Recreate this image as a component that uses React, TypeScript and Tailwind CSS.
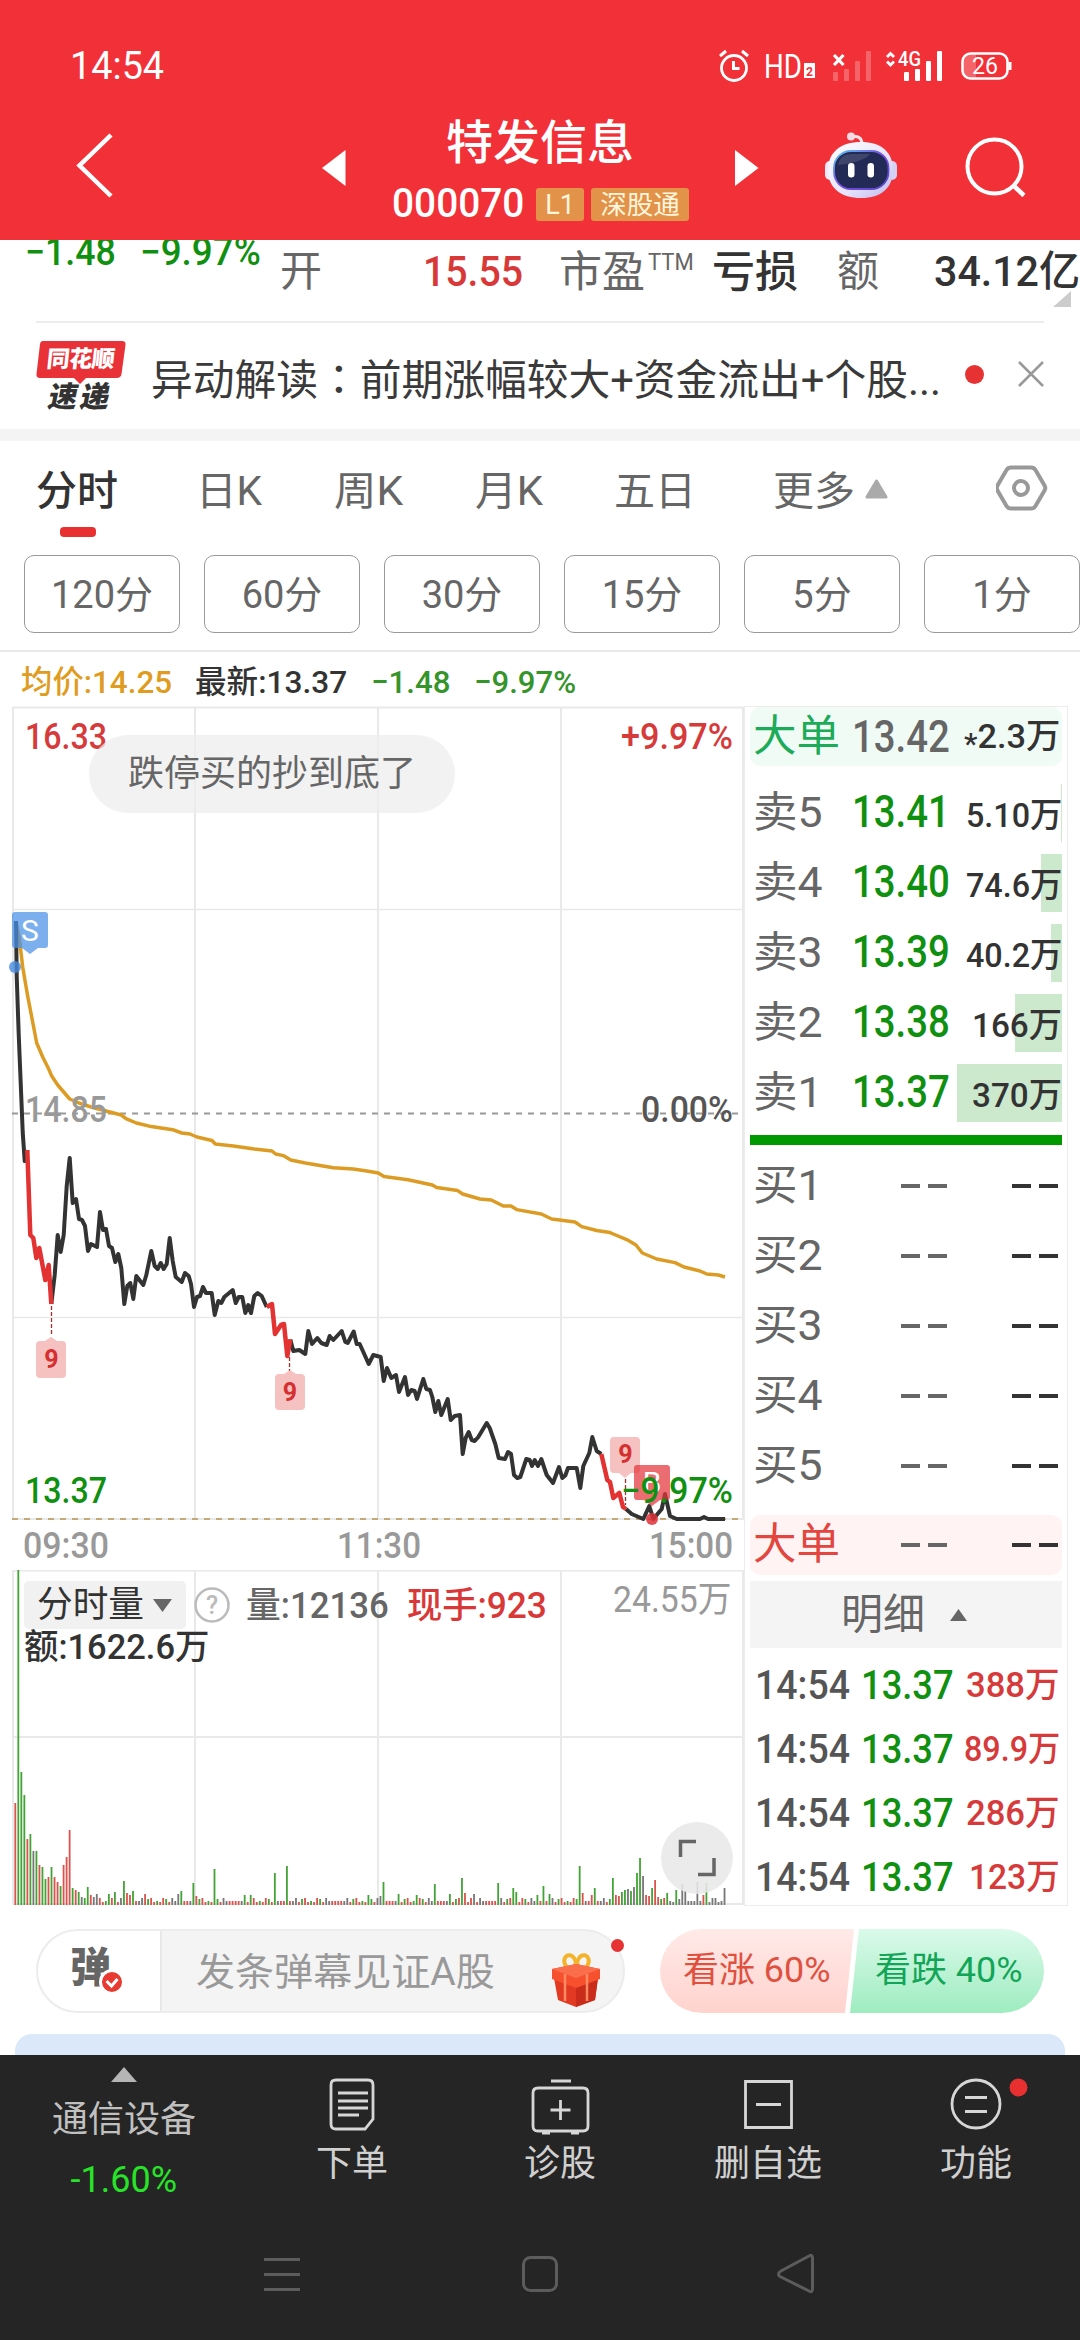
import { useLayoutEffect, useRef, useState } from "react";
import type { ReactNode } from "react";

const FONT = "font-['Roboto','Noto_Sans_CJK_SC',sans-serif]";

const tabs = [
  { label: "日K", w: 66, className: "ml-[74px]" },
  { label: "周K", w: 69, className: "ml-[72px]" },
  { label: "月K", w: 68, className: "ml-[72px]" },
  { label: "五日", w: 82, className: "ml-[71px]" },
  { label: "更多", w: 82, className: "ml-[77px]" },
];

const periods = ["120分", "60分", "30分", "15分", "5分", "1分"];

const asks = [
  { label: "卖5", price: "13.41", vol: "5.10万", bar: 1 },
  { label: "卖4", price: "13.40", vol: "74.6万", bar: 21 },
  { label: "卖3", price: "13.39", vol: "40.2万", bar: 11 },
  { label: "卖2", price: "13.38", vol: "166万", bar: 47 },
  { label: "卖1", price: "13.37", vol: "370万", bar: 105 },
];

const bids = ["买1", "买2", "买3", "买4", "买5"];

const trades = [
  { vol: "388万", w: 94 },
  { vol: "89.9万", w: 96 },
  { vol: "286万", w: 94 },
  { vol: "123万", w: 91 },
];

const avgLine =
  "16,922 19.3,938 22.7,967 27.3,994 36.7,1043 42.7,1057 48.7,1069 51.7,1076 57.7,1085 63.7,1092 69.7,1099 79,1103 91,1107 106,1111 121.3,1115 126,1118.6 136.3,1123 151.3,1126.6 172.7,1129.7 181.7,1133 190,1134 197,1137 212,1140.5 215.3,1144 233.3,1146 254.3,1149 272,1151 275.7,1154 283.3,1155.6 290.7,1160 305.3,1163 333.3,1167.7 353.3,1169 366.7,1171 378.3,1173 384,1176.6 408,1179.7 432.3,1185 436.7,1187.6 457.7,1190.6 462.7,1194 480,1199 491.3,1200 503.3,1206 511,1206 516.7,1209.6 541.3,1214 551.7,1219 575,1222 581.7,1226.6 596.7,1230.5 610,1232.6 613.3,1234 626.7,1239.6 636,1245 642.3,1253 656.7,1259 675,1262.6 684,1267 700,1271 706.7,1274 718.3,1275 725,1277";

const priceLines = [
  "16,921 16.7,976 18.7,1034 20.7,1083 22.7,1132 24.7,1161 27.3,1150",
  "51.3,1304 54.7,1275 57.7,1235 60.7,1252 63.7,1235 66.7,1186 69.7,1158 72.7,1203 76,1199 79,1219 82,1220 85,1226 88,1251 91,1244 97,1247 100,1212 103,1230 106,1229 109,1246 112,1248 115.3,1262 118.3,1254 121.3,1268 124.3,1304 127.3,1286 130.3,1283 133.3,1299 136.3,1276 143.3,1285 146.3,1275 151.3,1251 154.7,1266 157.7,1269 160.7,1263 163.7,1269 166.7,1264 169.7,1238 172.7,1261 175.7,1277 181.7,1282 185,1273 188.7,1276 191,1284 194,1307 197,1297 200,1296 203,1287 206,1293 211.7,1293 214.7,1315 218.3,1301 221.3,1303 224.3,1297 232.7,1290 235.7,1303 238.7,1297 242.3,1297 245.3,1313 248.3,1305 251,1313 254.3,1296 257.7,1293 261.7,1296 266.7,1307",
  "290.3,1339.5 293.3,1351 299.3,1350 305.3,1354 308.3,1331 312,1344 317.3,1338 321.3,1343 326.7,1345 329.7,1336 333.3,1340 341.7,1331 345.3,1342 347.7,1343 353.7,1331.5 356.7,1344 359.7,1344 368.7,1364 373.3,1355 380.7,1357 383.7,1381 387,1368 391.3,1378 396,1375 399,1392 405,1377 408,1395 411.3,1390 414.7,1391 417,1399 423.3,1379 426.3,1389 430,1390 432.3,1397 435.3,1412 438.3,1401 441.3,1415 447.7,1399 450.7,1420 454.7,1416 460,1415 462.7,1454 465.7,1438 468.7,1432 471.7,1440 474.7,1441 478.3,1437 486.7,1423 489.7,1428 495.3,1444 498.7,1458 505,1459 508,1452 511,1454 514,1475 517.3,1478 520.3,1477 526.3,1459 529.7,1460 532,1466 534.7,1460 538,1466 541.3,1459 546.7,1475 553,1483 559,1467 562.3,1478 565.3,1475.5 568,1468 576.7,1468 580.3,1488 583.3,1466 589.3,1453 592.3,1437 596.7,1451 601.3,1454",
  "626,1509 631.7,1514 643.3,1519 649.3,1506 653.3,1519 661.7,1509 665,1494 670,1516 676.7,1519 700,1519 704,1517 708,1519 725,1519",
];

const dropLines = [
  "27.3,1150 30.3,1235 33.3,1238 36.3,1258 39.3,1248 45.3,1280 48.7,1265 51.3,1304",
  "266.7,1307 272,1304 275,1334 281,1325 284,1324 287.3,1356 290.3,1339.5",
  "601.3,1454 607.3,1480 610,1482 613.3,1498 619.3,1493 623,1507 626,1509",
];

const barColors: Record<string, string> = {
  r: "#d9534f",
  g: "#43a336",
  k: "#777777",
};

// minute index -> bar height and colour
const peaks: Record<number, [number, string]> = {
  0: [102, "r"], 1: [335, "g"], 2: [133, "g"], 3: [110, "g"], 4: [66, "r"], 5: [71, "g"],
  6: [54, "k"], 7: [54, "g"], 8: [40, "r"], 9: [38, "g"], 10: [26, "g"], 11: [28, "r"],
  12: [38, "g"], 13: [28, "r"], 14: [23, "r"], 15: [19, "g"], 16: [40, "r"], 17: [48, "r"],
  18: [75, "r"], 19: [17, "g"], 20: [15, "r"], 21: [13, "g"], 22: [8, "k"], 23: [7, "g"],
  24: [18, "g"], 25: [10, "r"], 26: [8, "k"], 27: [11, "k"], 31: [11, "g"], 33: [13, "g"],
  36: [24, "g"], 37: [12, "r"], 38: [10, "r"], 39: [14, "g"], 43: [11, "r"], 54: [11, "k"],
  55: [14, "g"], 59: [22, "g"], 60: [9, "r"], 66: [36, "g"], 76: [10, "g"], 78: [10, "g"],
  86: [32, "g"], 90: [39, "g"], 117: [10, "g"], 121: [9, "k"], 122: [23, "g"], 127: [11, "g"],
  133: [10, "g"], 139: [21, "g"], 144: [11, "g"], 148: [27, "g"], 149: [12, "r"], 152: [11, "k"],
  160: [22, "g"], 165: [17, "g"], 166: [13, "g"], 173: [10, "g"], 175: [19, "g"], 177: [11, "g"],
  187: [39, "g"], 188: [12, "r"], 191: [10, "r"], 192: [17, "g"], 198: [27, "g"], 199: [10, "r"],
  200: [9, "r"], 201: [13, "g"], 202: [15, "g"], 203: [16, "k"], 204: [14, "g"], 205: [18, "k"],
  206: [32, "g"], 207: [47, "g"], 208: [29, "k"], 209: [10, "r"], 210: [9, "r"], 211: [17, "g"],
  212: [25, "r"], 213: [8, "r"], 216: [12, "g"], 219: [15, "g"], 221: [21, "k"], 222: [14, "k"],
  226: [23, "k"], 228: [10, "r"], 229: [22, "g"], 231: [7, "k"], 235: [17, "k"],
};

const bars = Array.from({ length: 236 }, (_, i): [number, string] => {
  if (peaks[i]) return peaks[i];
  const n = (i * 37 + i * i * 11) % 17;
  return [3 + (n % 5), i > 215 ? "k" : n < 7 ? "r" : n < 14 ? "g" : "k"];
});

// Squeezes a line of text into the given width
function Fit({ w, className = "", children }: { w: number; className?: string; children: ReactNode }) {
  const ref = useRef<HTMLSpanElement>(null);
  const [scale, setScale] = useState(1);

  useLayoutEffect(() => {
    if (ref.current) setScale(w / ref.current.offsetWidth);
  }, [w]);

  return (
    <span className={`block shrink-0 whitespace-nowrap ${className}`} style={{ width: w }}>
      <span ref={ref} className="inline-block origin-left" style={{ transform: `scaleX(${scale})` }}>
        {children}
      </span>
    </span>
  );
}

function StatusBar() {
  return (
    <div className="flex h-[108px] items-end pl-[70px]">
      <Fit w={94} className="text-[39px] leading-none mb-[22px]">14:54</Fit>
      <svg className="ml-[554px] mb-[22px]" width="296" height="40" viewBox="718 46 296 40" fill="none" stroke="#fff">
        <circle cx="734" cy="68" r="12.5" strokeWidth="2.8" />
        <path d="M733.5 61v7.5h6M720 56l6-5M748 56l-6-5" strokeWidth="3" />
        <g stroke="none" fill="#fff" fontFamily="Roboto">
          <text x="764" y="78" fontSize="33" textLength="38" lengthAdjust="spacingAndGlyphs">HD</text>
          <rect x="804" y="63" width="11" height="15" />
          <text x="806" y="76" fontSize="13" fontWeight="700" fill="#f23037" textLength="7" lengthAdjust="spacingAndGlyphs">2</text>
          <g fillOpacity=".25">
            <rect x="833" y="72" width="5" height="9" rx="1" />
            <rect x="844" y="69" width="5" height="12" rx="1" />
            <rect x="855" y="61" width="5" height="20" rx="1" />
            <rect x="866" y="51" width="5" height="30" rx="1" />
          </g>
          <rect x="904" y="72" width="5" height="9" rx="1" />
          <rect x="915" y="69" width="5" height="12" rx="1" />
          <rect x="926" y="61" width="5" height="20" rx="1" />
          <rect x="937" y="51" width="5" height="30" rx="1" />
          <text x="898" y="66" fontSize="20" fontWeight="500" textLength="23" lengthAdjust="spacingAndGlyphs">4G</text>
        </g>
        <path d="M834 55l9.500 10M843.500 55l-9.500 10" strokeWidth="3.200" />
        <path d="M887 57l3.500-3.500 3.500 3.500M887 61.500l3.500 3.500 3.500-3.500" strokeWidth="2.800" />
        <path d="M972 54h4v25h-4q-8 0-8-8v-9q0-8 8-8" fill="#fff" fillOpacity=".25" stroke="none" />
        <rect x="962.500" y="53.500" width="45" height="25" rx="8" strokeWidth="2.600" />
        <path d="M1010 62v8" strokeWidth="3" />
        <text x="972" y="73.500" fontSize="23" fontFamily="Roboto" fill="#fff" stroke="none" textLength="26" lengthAdjust="spacingAndGlyphs">26</text>
      </svg>
    </div>
  );
}

function Robot() {
  return (
    <svg width="76" height="72" viewBox="823 130 76 72">
      <defs>
        <linearGradient id="shell" x1="0" y1="0" x2="1" y2="1">
          <stop offset="0" stopColor="#ffffff" />
          <stop offset=".6" stopColor="#e6e3fb" />
          <stop offset="1" stopColor="#bdb8ee" />
        </linearGradient>
        <linearGradient id="visor" x1="0" y1="0" x2="1" y2="1">
          <stop offset="0" stopColor="#58c8f0" />
          <stop offset=".5" stopColor="#7a4be0" />
          <stop offset="1" stopColor="#5648c8" />
        </linearGradient>
      </defs>
      <path d="M852 137q9-2 10 6" fill="none" stroke="#fbe4ea" strokeWidth="3" />
      <circle cx="851" cy="136.500" r="4" fill="#f6dbe4" />
      <rect x="825" y="161" width="10" height="19" rx="5" fill="#e9e7f8" />
      <rect x="887" y="161" width="10" height="19" rx="5" fill="#d5d0f5" />
      <path d="M861 142c20 0 32 10 32 28s-12 28-32 28-33-10-33-28 13-28 33-28" fill="url(#shell)" />
      <rect x="834" y="151" width="54.500" height="38" rx="17" fill="#232a55" stroke="url(#visor)" strokeWidth="1.800" />
      <path d="M838 165q2-11 14-11h18q-6 8-32 11" fill="#ffffff" opacity=".13" />
      <rect x="848" y="163" width="6.500" height="14.500" rx="3.200" fill="#fff" />
      <rect x="867.500" y="163" width="6.500" height="14.500" rx="3.200" fill="#fff" />
    </svg>
  );
}

function Header() {
  return (
    <header className="h-[240px] bg-[#f23037] text-white">
      <StatusBar />
      <div className="flex h-[132px]">
        <svg className="mt-[23px] ml-[74px]" width="42" height="70" viewBox="74 131 42 70">
          <path d="M111 135L79.500 165.500L111 196" fill="none" stroke="#fff" strokeWidth="4.500" />
        </svg>
        <svg className="ml-[206px] mt-[42px]" width="24" height="36" viewBox="0 0 24 36">
          <path d="M0 18L23.500 0v36z" fill="#fff" />
        </svg>
        <div className="ml-[42px] w-[304px]">
          <h1 className="mt-[10px] h-[50px] text-center text-[47px] leading-[50px] font-medium">特发信息</h1>
          <div className="mt-[20px] flex h-[32px] items-center">
            <Fit w={132} className="ml-[4px] text-[40px] leading-[32px] font-medium">000070</Fit>
            <span className="ml-[12px] h-[33px] w-[48px] rounded-[3px] bg-[#e3924a] text-center text-[27px] leading-[34px] text-[#fff6dc]">L1</span>
            <span className="ml-[7px] h-[33px] w-[98px] rounded-[3px] bg-[#e3924a] text-center text-[26.500px] leading-[33px] text-[#fff6dc]">深股通</span>
          </div>
        </div>
        <svg className="ml-[43px] mt-[42px]" width="24" height="36" viewBox="0 0 24 36">
          <path d="M23.500 18L0 0v36z" fill="#fff" />
        </svg>
        <div className="mt-[22px] ml-[64px]"><Robot /></div>
        <svg className="mt-[26px] ml-[65px]" width="64" height="66" viewBox="964 134 64 66" fill="none" stroke="#fff">
          <circle cx="994.500" cy="166.500" r="27" strokeWidth="4" />
          <path d="M1013 185l11 10.500" strokeWidth="4.500" />
        </svg>
      </div>
    </header>
  );
}

function QuoteStrip() {
  return (
    <div className="flex h-[81px] overflow-hidden text-[42px] leading-[64px] whitespace-nowrap">
      <Fit w={91} className="-mt-[18px] ml-[25px] text-[38px] leading-[60px] font-medium text-[#109010]">−1.48</Fit>
      <Fit w={121} className="-mt-[18px] ml-[24px] text-[38px] leading-[60px] font-medium text-[#109010]">−9.97%</Fit>
      <span className="ml-[19px] w-[42px] text-[#666]">开</span>
      <Fit w={100} className="ml-[101px] font-medium text-[#d93838]">15.55</Fit>
      <span className="ml-[36px] w-[86px] text-[43px] text-[#666]">市盈</span>
      <Fit w={46} className="-mt-[9px] ml-[3px] text-[23px] text-[#666]">TTM</Fit>
      <span className="ml-[18px] w-[88px] text-[43px] font-medium text-[#333]">亏损</span>
      <span className="ml-[37px] w-[42px] text-[#666]">额</span>
      <Fit w={146} className="ml-[55px] font-medium text-[#333]">34.12亿</Fit>
      <svg className="mt-[51px] -ml-[27px] shrink-0" width="18" height="16" viewBox="0 0 18 16">
        <path d="M18 0v16H0z" fill="#ccc" />
      </svg>
    </div>
  );
}

function NewsRow() {
  return (
    <div className="mx-9 flex h-[108px] items-center border-t-2 border-[#ececec]">
      <div className="relative h-[72px] w-[90px] text-center">
        <svg className="absolute top-0 left-0" width="90" height="46" viewBox="0 0 90 46">
          <path d="M7 1h79q4 0 3.500 4l-4 29q-.5 4-5 4H50l-6 6-6-6H4q-4 0-3.500-4L4 4q.5-3 3-3" fill="#e93238" />
        </svg>
        <div className="relative -skew-x-6 pt-[8px] text-[23px] leading-[24px] font-black tracking-[-.5px] text-white">同花顺</div>
        <div className="relative mt-[11px] -skew-x-12 text-[29px] leading-[28px] font-black tracking-[3px] text-[#333]">速递</div>
      </div>
      <Fit w={790} className="mt-[5px] ml-[25px] text-[42px] text-[#3a3a3a]">
        异动解读<span className="font-['Noto_Sans_CJK_TC',sans-serif]" lang="zh-TW">：</span>前期涨幅较大+资金流出+个股...
      </Fit>
      <span className="-mt-[4px] ml-[24px] size-[19px] rounded-full bg-[#e63232]" />
      <svg className="-mt-[4px] ml-[34px]" width="26" height="26" viewBox="0 0 26 26">
        <path d="M1 1l24 24M25 1L1 25" stroke="#999" strokeWidth="2.500" />
      </svg>
    </div>
  );
}

function Tabs() {
  return (
    <div className="border-t-[12px] border-[#f4f4f4]">
      <div className="flex h-[114px] pl-[36px] text-[40px] leading-[101px] text-[#666]">
        <div className="relative w-[86px] text-[41px] font-medium text-[#333]">
          分时
          <span className="absolute top-[86px] left-[24px] h-[10px] w-[36px] rounded-[4px] bg-[#e93030]" />
        </div>
        {tabs.map((tab) => (
          <Fit key={tab.label} w={tab.w} className={tab.className}>{tab.label}</Fit>
        ))}
        <svg className="mt-[38px] ml-[10px]" width="23" height="20" viewBox="0 0 23 20">
          <path d="M11.500 2L21 18H2z" fill="#aaa" stroke="#aaa" strokeWidth="3" strokeLinejoin="round" />
        </svg>
        <svg className="mt-[23px] ml-[108px]" width="52" height="48" viewBox="0 0 52 48" fill="none" stroke="#999">
          <path d="M15 3.500h20q3 0 4.500 2.500l9 15.500q1.500 2.500 0 5l-9 15.500q-1.500 2.500-4.500 2.500H15q-3 0-4.500-2.500l-9-15.500q-1.500-2.500 0-5l9-15.500q1.500-2.500 4.500-2.500" strokeWidth="4" />
          <circle cx="25" cy="24" r="7" strokeWidth="4" />
        </svg>
      </div>
      <div className="flex gap-6 pl-6">
        {periods.map((p) => (
          <button key={p} className="h-[78px] w-[156px] shrink-0 rounded-[10px] border border-[#999] pt-[2px] text-[38px] leading-[74px] text-[#666]">
            {p}
          </button>
        ))}
      </div>
      <div className="mt-[17px] flex h-[56px] border-t-2 border-[#e8e8e8] text-[32px] leading-[60px] font-medium">
        <Fit w={151} className="ml-[21px] text-[#e09c20]">均价:14.25</Fit>
        <Fit w={152} className="ml-[23px] text-[#333]">最新:13.37</Fit>
        <Fit w={79} className="ml-[24px] text-[#35942a]">−1.48</Fit>
        <Fit w={102} className="ml-[24px] text-[#35942a]">−9.97%</Fit>
      </div>
    </div>
  );
}

type LabelProps = { x: number; y: number; w: number; fill: string; text: string };

function AxisLabel({ x, y, w, fill, text }: LabelProps) {
  return (
    <text x={x} y={y} fill={fill} fontSize="36" fontWeight="500" textLength={w} lengthAdjust="spacingAndGlyphs">
      {text}
    </text>
  );
}

function PriceChart() {
  return (
    <div className="relative h-[864px]">
      <svg className="block" width="744" height="864" viewBox="0 706 744 864" fontFamily="Roboto" fill="none">
        <g stroke="#e9e9e9" strokeWidth="2">
          <path d="M13 707.500H743V1519H13zM195 707v812M378 707v812M561 707v812" />
          <path d="M13 909.500H743M13 1317.500H743" strokeWidth="1.500" />
        </g>
        <path d="M12 1113.500H742" stroke="#999" strokeWidth="2" strokeDasharray="6 6" />
        <path d="M12 1519H742" stroke="#c4a878" strokeWidth="2" strokeDasharray="6 6" />
        <polyline points={avgLine} stroke="#dc9c24" strokeWidth="3.500" strokeLinejoin="round" />
        <g stroke="#333" strokeWidth="4" strokeLinejoin="round">
          {priceLines.map((p) => <polyline key={p} points={p} />)}
        </g>
        <g stroke="#e23232" strokeWidth="4.500" strokeLinejoin="round">
          {dropLines.map((p) => <polyline key={p} points={p} />)}
        </g>
        <path d="M51.500 1306v30M289.500 1357v14M625.500 1479v26" stroke="#a03030" strokeWidth="1.300" strokeDasharray="4 2" />
        <path d="M40 1341h5l6-4 6 4h5q4 0 4 4v29q0 4-4 4H40q-4 0-4-4v-29q0-4 4-4M279 1374h5l6-4 6 4h5q4 0 4 4v28q0 4-4 4h-22q-4 0-4-4v-28q0-4 4-4M614 1437h22q4 0 4 4v28q0 4-4 4h-5l-6 5-6-5h-5q-4 0-4-4v-28q0-4 4-4" fill="#f0a0a0" fillOpacity=".65" />
        <g fill="#d52f2f" fontSize="25" fontWeight="700" textAnchor="middle">
          <text x="51.500" y="1368">9</text>
          <text x="290" y="1401">9</text>
          <text x="625.500" y="1463">9</text>
        </g>
        <path d="M15 912h30q3 0 3 3v30q0 3-3 3h-7l-8 6-8-6h-7q-3 0-3-3v-30q0-3 3-3" fill="#4a90e8" fillOpacity=".72" />
        <text x="30" y="941" fontSize="30" fill="#fff" textAnchor="middle">S</text>
        <circle cx="15" cy="967" r="6" fill="#468be0" fillOpacity=".8" />
        <path d="M637 1465h30q3 0 3 3v29q0 3-3 3h-7l-8 6-8-6h-7q-3 0-3-3v-29q0-3 3-3" fill="#e5343a" fillOpacity=".72" />
        <text x="652" y="1493" fontSize="30" fill="#fff" textAnchor="middle">B</text>
        <circle cx="652" cy="1519" r="6" fill="#e03038" fillOpacity=".85" />
        <AxisLabel x={25} y={749} w={82} fill="#d63a3a" text="16.33" />
        <AxisLabel x={621} y={749} w={112} fill="#d63a3a" text="+9.97%" />
        <AxisLabel x={25} y={1122} w={82} fill="#999" text="14.85" />
        <AxisLabel x={641} y={1122} w={92} fill="#555" text="0.00%" />
        <AxisLabel x={25} y={1503} w={82} fill="#109010" text="13.37" />
        <AxisLabel x={621} y={1503} w={112} fill="#109010" text="−9.97%" />
        <AxisLabel x={23} y={1558} w={86} fill="#999" text="09:30" />
        <AxisLabel x={337} y={1558} w={84} fill="#999" text="11:30" />
        <AxisLabel x={649} y={1558} w={84} fill="#999" text="15:00" />
      </svg>
      <div className="absolute top-[29px] left-[89px] h-[78px] w-[366px] rounded-full bg-[#ececec]/70 text-center text-[36px] leading-[79px] text-[#666]">
        跌停买的抄到底了
      </div>
    </div>
  );
}

function VolumeChart() {
  return (
    <div className="relative h-[336px]">
      <svg className="absolute inset-0" width="744" height="336" viewBox="0 1570 744 336" fill="none">
        <path d="M13 1570.500H743V1904H13zM13 1737H743M195 1570v334M378 1570v334M561 1570v334" stroke="#e9e9e9" strokeWidth="2" />
        {bars.map(([h, c], i) => (
          <rect key={i} x={14.4 + i * 3.018} y={1905 - h} width="1.800" height={h} fill={barColors[c]} />
        ))}
      </svg>
      <div className="relative flex pt-[11px] pl-[24px] text-[36px] leading-[51px] font-medium">
        <div className="flex h-[48px] w-[162px] items-center rounded-[5px] bg-[#f1f1f1] pl-[13px] text-[#333]">
          <Fit w={107} className="font-normal">分时量</Fit>
          <svg className="ml-[9px]" width="19" height="13" viewBox="0 0 19 13"><path d="M0 0h19L9.500 13z" fill="#666" /></svg>
        </div>
        <svg className="mt-[6px] ml-[8px]" width="36" height="36" viewBox="0 0 36 36">
          <circle cx="18" cy="18" r="16.500" fill="none" stroke="#bbb" strokeWidth="2.500" />
          <text x="18" y="27" fontSize="25" fontFamily="Roboto" fill="#bbb" textAnchor="middle">?</text>
        </svg>
        <Fit w={143} className="ml-[16px] text-[#666]">量:12136</Fit>
        <Fit w={140} className="ml-[18px] text-[#d93838]">现手:923</Fit>
        <Fit w={118} className="-mt-[6px] ml-[66px] font-normal text-[#999]">24.55万</Fit>
      </div>
      <Fit w={185} className="relative -mt-[8px] ml-[24px] text-[35px] leading-[48px] font-medium text-[#333]">额:1622.6万</Fit>
      <svg className="absolute top-[252px] left-[661px]" width="72" height="72" viewBox="0 0 72 72">
        <circle cx="36" cy="36" r="36" fill="#e8e8e8" fillOpacity=".88" />
        <path d="M19.500 35V19.500H35M37 52.500H53V36" fill="none" stroke="#666" strokeWidth="3.500" />
      </svg>
    </div>
  );
}

function Dashes() {
  return (
    <svg width="158" height="4" viewBox="0 0 158 4">
      <path d="M0 2h19M27 2h19" stroke="#666" strokeWidth="4" />
      <path d="M111 2h19M138 2h19" stroke="#333" strokeWidth="4" />
    </svg>
  );
}

function OrderBook() {
  return (
    <div className="mr-[12px] h-[1200px] w-[324px] border border-[#ececec] bg-white pr-[5px] pl-[5px] text-[42px]">
      <div className="flex h-[59px] items-center rounded-[10px] bg-[#f1fbf6] pl-[3px] leading-[56px] text-[#1cab58]">
        <span className="w-[88px] text-[43.500px]">大单</span>
        <Fit w={98} className="ml-[11px] text-[45px] text-[#666] font-medium">13.42</Fit>
        <Fit w={96} className="ml-[14px] text-[34px] leading-[66px] font-medium text-[#333]">
          <span className="relative top-[6px] text-[30px]">*</span>2.3万
        </Fit>
      </div>
      <div className="mt-[18px] flex flex-col gap-[12px]">
        {asks.map((row) => (
          <div key={row.label} className="relative flex h-[58px] items-center pl-[3px] leading-[54px]">
            <span className="absolute top-0 right-0 h-full bg-[#cce9ce]" style={{ width: row.bar }} />
            <Fit w={70} className="relative text-[#666]">{row.label}</Fit>
            <Fit w={98} className="relative -top-px ml-[29px] text-[45px] font-medium text-[#109010]">{row.price}</Fit>
            <span className="relative ml-auto text-[#333]">
              <Fit w={row.vol.length === 4 ? 90 : 96} className="pt-[4px] text-[34px] font-medium">{row.vol}</Fit>
            </span>
          </div>
        ))}
      </div>
      <div className="mt-[13px] h-[10px] bg-[#009a00]" />
      <div className="mt-[6px]">
        {bids.map((label) => (
          <div key={label} className="flex h-[70px] items-center pl-[3px] leading-[66px] text-[#666]">
            <Fit w={70}>{label}</Fit>
            <span className="ml-[78px]"><Dashes /></span>
          </div>
        ))}
      </div>
      <div className="mt-[14px] flex h-[60px] items-center rounded-[10px] bg-[#fff4f3] pl-[3px] leading-[56px] text-[#e2463e]">
        <span className="w-[148px] text-[43.500px]">大单</span>
        <Dashes />
      </div>
      <div className="mt-[6px] flex h-[67px] items-center bg-[#f4f4f4] pl-[91px] leading-[67px] text-[#666]">
        明细
        <svg className="ml-[25px]" width="17" height="12" viewBox="0 0 17 12"><path d="M0 12h17L8.500 0z" fill="#666" /></svg>
      </div>
      <div className="mt-[5px]">
        {trades.map((row) => (
          <div key={row.vol} className="flex h-[64px] items-center pl-[5px] text-[41px] leading-[64px] font-medium">
            <Fit w={95} className="text-[#555]">14:54</Fit>
            <Fit w={93} className="ml-[11px] text-[#109010]">13.37</Fit>
            <span className="mr-[2px] ml-auto"><Fit w={row.w} className="pt-[2px] text-[35px] text-[#d63a3a]">{row.vol}</Fit></span>
          </div>
        ))}
      </div>
    </div>
  );
}

function Gift() {
  return (
    <svg width="54" height="56" viewBox="0 0 54 56">
      <g fill="none" stroke="#f3b42c" strokeWidth="4">
        <ellipse cx="21" cy="9" rx="5.500" ry="7" transform="rotate(-20 21 9)" />
        <ellipse cx="34" cy="9" rx="5.500" ry="7" transform="rotate(20 34 9)" />
      </g>
      <path d="M5 25L27 32V54L9 47zM49 25L27 32V54L46 47z" fill="#e23a22" />
      <path d="M27 32V54L46 47L49 25z" fill="#c92c1a" />
      <path d="M3 16L27 11L51 16L51 26L27 35L3 26z" fill="#f6502f" />
      <path d="M3 16L27 11L51 16L27 25z" fill="#fb6e4b" />
      <path d="M16 21v27M38 21v27" stroke="#ff8a62" strokeWidth="2.500" />
    </svg>
  );
}

function BarrageRow() {
  return (
    <div className="flex h-[107px] pt-[23px] pl-9">
      <div className="relative flex h-[84px] w-[589px] overflow-visible rounded-full border-2 border-[#ececec] bg-[#f4f4f4]">
        <div className="flex w-[124px] rounded-l-full border-r-2 border-[#e8e8e8] bg-white pl-[32px] text-[41px] leading-[74px] font-black text-[#666]">弹</div>
        <svg className="absolute top-[38px] left-[61px]" width="26" height="26" viewBox="0 0 26 26">
          <circle cx="13" cy="13" r="11.500" fill="#e83a30" stroke="#fff" strokeWidth="3" />
          <path d="M7.500 12l5 5 6-7" fill="none" stroke="#fff" strokeWidth="3" />
        </svg>
        <Fit w={299} className="ml-[34px] text-[38px] leading-[83px] text-[#999]">发条弹幕见证A股</Fit>
        <span className="mt-[22px] ml-[54px]"><Gift /></span>
        <span className="absolute top-[8px] right-[-1px] size-[13px] rounded-full bg-[#e63232]" />
      </div>
      <div className="relative ml-[35px] h-[84px] w-[384px]">
        <svg className="absolute inset-0" width="384" height="84" viewBox="0 0 384 84">
          <defs>
            <linearGradient id="up" x2="0" y2="1"><stop stopColor="#ffeae8" /><stop offset="1" stopColor="#ffd3ce" /></linearGradient>
            <linearGradient id="down" x2="0" y2="1"><stop stopColor="#dafaea" /><stop offset="1" stopColor="#9fecc0" /></linearGradient>
          </defs>
          <path d="M42 0H194L185 84H42A42 42 0 0 1 42 0" fill="url(#up)" />
          <path d="M199 0H342A42 42 0 0 1 342 84H190z" fill="url(#down)" />
        </svg>
        <div className="relative flex text-[35px] leading-[84px]">
          <Fit w={148} className="ml-[23px] text-[#e0503f]">看涨 60%</Fit>
          <Fit w={148} className="ml-[44px] text-[#12a558]">看跌 40%</Fit>
        </div>
      </div>
    </div>
  );
}

const navItems: { label: string; icon: ReactNode }[] = [
  {
    label: "下单",
    icon: <path d="M10 5h32q5 0 5 5v34l-8 10H10q-5 0-5-5V10q0-5 5-5M12 18h30M12 26h30M12 33h30M12 40h21" />,
  },
  {
    label: "诊股",
    icon: <path d="M4 13h45q5 0 5 5v33q0 5-5 5H4q-5 0-5-5V18q0-5 5-5M17 6h20M26.500 25v20M16.500 35h20M8 58h8M37 58h8" />,
  },
  { label: "删自选", icon: <path d="M3.500 6.500h46v46h-46zM14 29.500h25" /> },
  {
    label: "功能",
    icon: (
      <>
        <circle cx="26" cy="29" r="24" />
        <path d="M15 22.500h22M15 36.500h22" />
        <circle cx="68.500" cy="12.500" r="9" fill="#e93030" stroke="none" />
      </>
    ),
  },
];

function BottomNav() {
  return (
    <footer className="h-[285px] bg-[#252525] text-[36px] text-[#d0d0d0]">
      <div className="flex h-[180px]">
        <div className="flex w-[248px] flex-col items-center">
          <svg className="mt-[12px]" width="26" height="15" viewBox="0 0 26 15"><path d="M0 15h26L13 0z" fill="#b5b5b5" /></svg>
          <span className="mt-[11px] leading-[54px] text-[#c0c0c0]">通信设备</span>
          <Fit w={107} className="mt-[6px] leading-[54px] text-[#28e428]">-1.60%</Fit>
        </div>
        {navItems.map((item) => (
          <div key={item.label} className="flex w-[208px] flex-col items-center">
            <svg className="mt-[20px] overflow-visible" width="53" height="58" viewBox="0 0 53 58" fill="none" stroke="#d6d6d6" strokeWidth="2.800">
              {item.icon}
            </svg>
            <span className="mt-[4px] leading-[54px]">{item.label}</span>
          </div>
        ))}
      </div>
      <svg width="1080" height="80" viewBox="0 2235 1080 80" fill="none" stroke="#5c5c5c" strokeWidth="3">
        <path d="M264 2259.500h36M264 2274.500h36M264 2289.500h36" />
        <rect x="523.500" y="2257.500" width="33" height="33" rx="7" />
        <path d="M780 2271.500L809 2256q3.500-2 3.500 2v31q0 4-3.500 2L780 2276.500q-3-2 0-5" />
      </svg>
    </footer>
  );
}

export default function App() {
  return (
    <div className={`h-[2340px] w-[1080px] overflow-hidden bg-white ${FONT}`}>
      <Header />
      <QuoteStrip />
      <NewsRow />
      <Tabs />
      <div className="flex h-[1200px]">
        <div className="w-[744px]">
          <PriceChart />
          <VolumeChart />
        </div>
        <OrderBook />
      </div>
      <BarrageRow />
      <div className="mx-[15px] mt-[21px] h-[21px] rounded-t-[17px] bg-[#dae8fa]" />
      <BottomNav />
    </div>
  );
}
